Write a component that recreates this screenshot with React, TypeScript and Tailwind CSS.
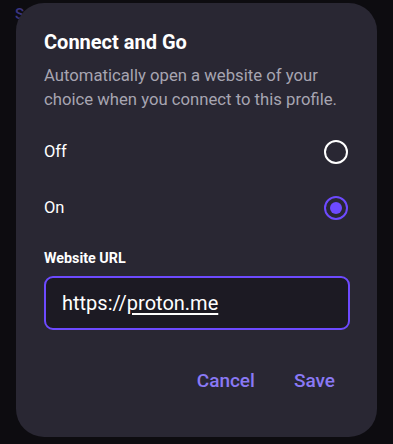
import React from "react";

const Radio = ({ checked }: { checked: boolean }) =>
  checked ? (
    <span className="flex h-[24px] w-[24px] items-center justify-center rounded-full border-2 border-[#6d4aff]">
      <span className="h-[12px] w-[12px] rounded-full bg-[#6d4aff]" />
    </span>
  ) : (
    <span className="h-[24px] w-[24px] rounded-full border-2 border-white" />
  );

const App = () => {
  return (
    <div
      className="relative h-[444px] w-[393px] overflow-hidden bg-[#0d0c10] px-4 pt-[3px]"
      style={{ fontFamily: "Roboto, 'Noto Sans', sans-serif" }}
    >
      {/* screen behind the dialog, mostly hidden */}
      <span className="absolute left-[15px] top-[3px] text-[15px] font-medium text-[#3b3580]">S</span>
      <div className="relative flex h-[434px] w-[361px] flex-col rounded-[28px] bg-[#292733] pl-7 pr-[27px] pt-[27px]">
        <h1 className="text-[20px] font-bold leading-6 text-white">Connect and Go</h1>
        <p className="mt-[10px] text-[16.7px] leading-6 text-[#a7a5b1]">
          Automatically open a website of your choice when you connect to this profile.
        </p>
        <div className="mt-[28px] flex h-[24px] items-center justify-between pr-[2px]">
          <span className="text-[16.5px] text-white">Off</span>
          <Radio checked={false} />
        </div>
        <div className="mt-[32px] flex h-[24px] items-center justify-between pr-[2px]">
          <span className="text-[16.5px] text-white">On</span>
          <Radio checked />
        </div>
        <label className="mt-[28px] text-[14.3px] font-bold leading-5 text-white">Website URL</label>
        <div className="mt-[8px] flex h-[54px] items-center rounded-[9px] border-2 border-[#6d4aff] bg-[#1c1a23] px-[16px]">
          <span className="text-[20px] text-white">
            https://<span className="underline underline-offset-[3px]">proton.me</span>
          </span>
        </div>
        <div className="mt-[39px] flex h-[24px] items-center justify-end gap-[39px] pr-[15px]">
          <button className="text-[19px] font-medium text-[#8a79f5]">Cancel</button>
          <button className="text-[19px] font-medium text-[#8a79f5]">Save</button>
        </div>
      </div>
    </div>
  );
};

export default App;
